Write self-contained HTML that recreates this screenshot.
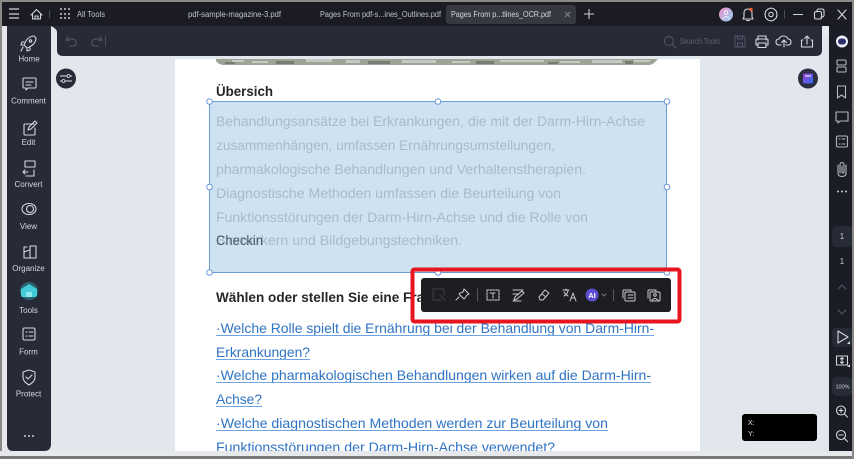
<!DOCTYPE html>
<html><head><meta charset="utf-8"><style>
html,body{margin:0;padding:0;width:854px;height:459px;overflow:hidden;background:#e2e6ed}
svg{display:block;filter:blur(.35px)}
text{font-family:"Liberation Sans",sans-serif}
.ic{fill:none;stroke:#d4d6dc;stroke-width:1.1;stroke-linecap:round;stroke-linejoin:round}
.tb{fill:none;stroke:#c9cbd0;stroke-width:1;stroke-linecap:round;stroke-linejoin:round}
.dim{fill:none;stroke:#555a68;stroke-width:1;stroke-linecap:round;stroke-linejoin:round}
.lb{font-size:8px;fill:#d6d8de;text-anchor:middle}
.body{font-size:14px;fill:#a8bacb}
.h{font-size:14px;font-weight:bold;fill:#26262a}
.lk{font-size:14px;fill:#2f73c4}
.ul{stroke:#6ea5e0;stroke-width:1}
.hd{fill:#fff;stroke:#6b9bd8;stroke-width:1}
</style></head><body>
<svg width="854" height="459" viewBox="0 0 854 459" xmlns="http://www.w3.org/2000/svg">
<rect width="854" height="459" fill="#e2e6ed"/>
<!-- page -->
<rect x="175" y="59" width="525" height="393" fill="#fff"/>
<path d="M216 59H658L654 63Q652 65 648 65H224Q219 65 216 61Z" fill="#9ea297"/>
<path d="M232 60h12v2h-12zM252 61h16v2h-16zM306 59h26v3h-26zM346 60h14v3h-14zM402 60h34v3h-34zM452 61h18v2h-18zM500 60h44v2h-44zM560 61h20v2h-20zM592 60h30v3h-30zM634 60h16v2h-16z" fill="#c6c9c1"/>
<path d="M225 62h10v2h-10zM276 61h18v3h-18zM368 61h22v3h-22zM476 61h18v3h-18zM548 62h10v2h-10zM625 61h8v3h-8z" fill="#777c72"/>

<text class="h" x="216" y="96" textLength="57" lengthAdjust="spacingAndGlyphs">Übersich</text>

<!-- selection -->
<rect x="209.500" y="101.500" width="457" height="171" fill="#cfe2f2" stroke="#6b9bd8"/>
<text class="body" x="216" y="126" textLength="429" lengthAdjust="spacingAndGlyphs">Behandlungsansätze bei Erkrankungen, die mit der Darm-Hirn-Achse</text>
<text class="body" x="216" y="150" textLength="339" lengthAdjust="spacingAndGlyphs">zusammenhängen, umfassen Ernährungsumstellungen,</text>
<text class="body" x="216" y="174" textLength="370" lengthAdjust="spacingAndGlyphs">pharmakologische Behandlungen und Verhaltenstherapien.</text>
<text class="body" x="216" y="198" textLength="345" lengthAdjust="spacingAndGlyphs">Diagnostische Methoden umfassen die Beurteilung von</text>
<text class="body" x="216" y="222" textLength="372" lengthAdjust="spacingAndGlyphs">Funktionsstörungen der Darm-Hirn-Achse und die Rolle von</text>
<text class="body" x="216" y="245" textLength="246" lengthAdjust="spacingAndGlyphs">Biomarkern und Bildgebungstechniken.</text>
<text x="216" y="245" font-size="14" fill="#4d5a66" textLength="47" lengthAdjust="spacingAndGlyphs">Checkin</text>
<circle class="hd" cx="209.500" cy="101.500" r="2.800"/><circle class="hd" cx="438" cy="101.500" r="2.800"/><circle class="hd" cx="667" cy="101.500" r="2.800"/>
<circle class="hd" cx="209.500" cy="187" r="2.800"/><circle class="hd" cx="667" cy="187" r="2.800"/>
<circle class="hd" cx="209.500" cy="272.500" r="2.800"/><circle class="hd" cx="438" cy="272.500" r="2.800"/><circle class="hd" cx="667" cy="272.500" r="2.800"/>

<text class="h" x="216" y="302" textLength="224" lengthAdjust="spacingAndGlyphs">Wählen oder stellen Sie eine Frage</text>

<text class="lk" x="216" y="333" textLength="438" lengthAdjust="spacingAndGlyphs">·Welche Rolle spielt die Ernährung bei der Behandlung von Darm-Hirn-</text>
<line class="ul" x1="216" x2="654" y1="335.500" y2="335.500"/>
<text class="lk" x="216" y="357" textLength="94" lengthAdjust="spacingAndGlyphs">Erkrankungen?</text>
<line class="ul" x1="216" x2="310" y1="359.500" y2="359.500"/>
<text class="lk" x="216" y="380" textLength="435" lengthAdjust="spacingAndGlyphs">·Welche pharmakologischen Behandlungen wirken auf die Darm-Hirn-</text>
<line class="ul" x1="216" x2="651" y1="382.500" y2="382.500"/>
<text class="lk" x="216" y="404" textLength="46" lengthAdjust="spacingAndGlyphs">Achse?</text>
<line class="ul" x1="216" x2="262" y1="406.500" y2="406.500"/>
<text class="lk" x="216" y="428" textLength="392" lengthAdjust="spacingAndGlyphs">·Welche diagnostischen Methoden werden zur Beurteilung von</text>
<line class="ul" x1="216" x2="608" y1="430.500" y2="430.500"/>
<text class="lk" x="216" y="452" textLength="339" lengthAdjust="spacingAndGlyphs">Funktionsstörungen der Darm-Hirn-Achse verwendet?</text>

<!-- red box + floating bar -->
<rect x="412.500" y="269.500" width="267" height="52" rx="2" fill="none" stroke="#e8141f" stroke-width="4"/>
<rect x="421" y="278" width="250" height="34" rx="3" fill="#1d1e21"/>
<g class="tb">
<path d="M441 300h-8v-11h11v6M440 295l5 5" style="stroke:#3c3e44"/>
<path d="M464 289l5 5-2 1-2 3-1 1-5-5 1-1 3-1zM459 297l-3 3"/>
<line x1="477.500" y1="289" x2="477.500" y2="301" stroke="#55575c"/>
<path d="M487 290h12v10h-12zM490 293h6M493 293v5" stroke-dasharray="2 1"/>
<path d="M513 290h10M513 294h5M514 300l1-3 7-6 2 2-7 6zM513 301h8"/>
<path d="M539 297l6-7 4 3-6 7h-3zM542 294l4 3"/>
<path d="M563 290h6M566 289v1.500M564 296c2-1 4-3 4-6M564 292c1 2 2 3 4 4M570 301l3-8 3 8M571 298h4"/>
</g>
<circle cx="592" cy="295" r="6.500" fill="#5b4ed0"/>
<text x="592" y="298" font-size="7.500" font-weight="bold" fill="#fff" text-anchor="middle">AI</text>
<path d="M602 294l2 2 2-2" class="tb" style="stroke:#777"/>
<line x1="613.500" y1="289" x2="613.500" y2="301" stroke="#55575c"/>
<g class="tb">
<path d="M623 298v-7q0-1 1-1h7v1"/><rect x="625" y="292" width="10" height="9" rx="1"/><path d="M628 295h5M628 298h5"/>
<path d="M648 298v-7q0-1 1-1h7v1"/><rect x="650" y="292" width="10" height="9" rx="1"/><circle cx="655" cy="295" r="1.300"/><path d="M652 300q3-3 6 0"/>
</g>

<!-- top frame & title bar -->
<rect width="854" height="2" fill="#8b8a86"/>
<rect y="2" width="854" height="24" fill="#1a1b23"/>
<path d="M9 9h10M9 14h10M9 18h10" stroke="#d0d2d6" stroke-width="1.200" fill="none"/>
<path class="ic" d="M31 15l5.500-5.500L42 15M32.500 14v5h8v-5M35 19v-3h3v3"/>
<line x1="49.500" y1="10" x2="49.500" y2="18" stroke="#4a4c55"/>
<g fill="#c9cbd0"><circle cx="61" cy="9" r="1"/><circle cx="65" cy="9" r="1"/><circle cx="69" cy="9" r="1"/><circle cx="61" cy="14" r="1"/><circle cx="65" cy="14" r="1"/><circle cx="69" cy="14" r="1"/><circle cx="61" cy="18" r="1"/><circle cx="65" cy="18" r="1"/><circle cx="69" cy="18" r="1"/></g>
<text x="77" y="17" font-size="8" fill="#c2c4ca" textLength="28" lengthAdjust="spacingAndGlyphs">All Tools</text>
<text x="188" y="17" font-size="8" fill="#c2c4ca" textLength="93" lengthAdjust="spacingAndGlyphs">pdf-sample-magazine-3.pdf</text>
<text x="320" y="17" font-size="8" fill="#c2c4ca" textLength="121" lengthAdjust="spacingAndGlyphs">Pages From pdf-s...ines_Outlines.pdf</text>
<rect x="446" y="5" width="130" height="19" rx="3" fill="#363941"/>
<text x="451" y="17" font-size="8" fill="#d6d8dc" textLength="100" lengthAdjust="spacingAndGlyphs">Pages From p...tlines_OCR.pdf</text>
<path d="M565 12l5 5M570 12l-5 5" stroke="#85878d" fill="none"/>
<path d="M589 9v10M584 14h10" stroke="#c9cbd0" stroke-width="1.100" fill="none"/>
<defs><linearGradient id="av" x1="0" y1="0" x2="1" y2="1"><stop offset="0" stop-color="#f28cc8"/><stop offset="1" stop-color="#8fd4f5"/></linearGradient>
<linearGradient id="bk" x1="0" y1="0" x2="1" y2="1"><stop offset="0" stop-color="#a13fd8"/><stop offset="1" stop-color="#2f6ef0"/></linearGradient></defs>
<circle cx="726" cy="14.500" r="7" fill="url(#av)"/><circle cx="726" cy="12.500" r="1.800" fill="none" stroke="#fff" stroke-width=".8"/><path d="M722.500 18.500q3.500-3.500 7 0" fill="none" stroke="#fff" stroke-width=".8"/>
<path class="ic" d="M743 19h10l-1-2v-4q0-4-4-4t-4 4v4zM746.500 20.500h3"/><circle cx="751" cy="9.500" r="1.800" fill="#f0603a"/>
<circle class="ic" cx="771" cy="14.500" r="2.200"/><path class="ic" d="M768 9l3-1 3 1 2.500 2.500 .5 3-.5 3-2.500 2.500-3 1-3-1-2.500-2.500-.5-3 .5-3z"/>
<line x1="784.500" y1="10" x2="784.500" y2="19" stroke="#4a4c55"/>
<path d="M793 14.500h10" stroke="#c9cbd0" stroke-width="1.100"/>
<path class="ic" d="M817 12v-1q0-2 2-2h3q2 0 2 2v4q0 2-2 2h-1"/><rect class="ic" x="814.500" y="11.500" width="7" height="7.500" rx="1.500"/>
<path class="ic" d="M838 10l8 9M846 10l-8 9"/>

<!-- toolbar -->
<path d="M51 26h771v24q0 6-6 6H63q-6 0-6-6V32q0-3-6-6z" fill="#272b38"/>
<path class="dim" d="M68 37l-2 3 3 1M67 39h5q4 0 4 3.500t-4 3.500h-2M100 37l2 3-3 1M101 39h-5q-4 0-4 3.500t4 3.500h2"/>
<line x1="105.500" y1="36" x2="105.500" y2="47" stroke="#4a4e5a"/>
<circle class="dim" cx="669" cy="41" r="4.500"/><path class="dim" d="M672.500 44.500l3.500 3.500"/>
<text x="680" y="44" font-size="8.500" fill="#5e6270" textLength="40" lengthAdjust="spacingAndGlyphs">Search Tools</text>
<path class="dim" d="M735 36h8l2 2v9h-10zM737.500 36v3h5v-3M737.500 47v-4h5v4"/>
<g class="ic"><path d="M758 40v-4h8v4M758 45h-2v-5q0-1 1-1h10q1 0 1 1v5h-2"/><rect x="758" y="43" width="8" height="4.500"/>
<path d="M781 45h-2q-3 0-3-3t3-3q1-3 4.500-3t4.500 3q3 0 3 3t-3 3h-2M784 47v-7M781.500 42.500l2.500-2.500 2.500 2.500"/>
<path d="M803 40h-1.500v7h11v-7H811M807 44v-8M804.500 38.500l2.500-2.500 2.500 2.500"/></g>

<!-- filter/calendar floats -->
<circle cx="66" cy="78.500" r="10" fill="#272b38"/>
<path d="M60 76h12M60 81h12" stroke="#e0e2e6" stroke-width=".9"/><circle cx="68.500" cy="76" r="1.500" fill="#272b38" stroke="#e0e2e6" stroke-width=".8"/><circle cx="63.500" cy="81" r="1.500" fill="#272b38" stroke="#e0e2e6" stroke-width=".8"/>
<circle cx="808" cy="78.500" r="10" fill="#2a2e40"/>
<rect x="803" y="73.500" width="10" height="10" rx="1.500" fill="url(#bk)"/><path d="M805 76h6" stroke="#fff" stroke-width="1"/>

<!-- left sidebar -->
<path d="M7 26h44v418q0 7-7 7H13q-6 0-6-7z" fill="#272b38"/>
<rect x="2" y="26" width="5" height="430" fill="#e6e8ec"/>
<rect x="0" y="0" width="2" height="459" fill="#8b8a86"/>
<g class="ic">
<path d="M34 36c-4 0-8 3-10 9l3 3c6-2 9-6 9-10zM24 42h-2l-1 3h3M30 48v2l-3 1v-3M23 47l-2 4"/><circle cx="30.500" cy="41" r="1.200"/>
<path d="M24 78h11q1 0 1 1v8q0 1-1 1h-7l-2 2v-2h-2q-1 0-1-1v-8q0-1 1-1zM26 82h7M26 85h5"/>
<path d="M34 124h-9q-1 0-1 1v9q0 1 1 1h9q1 0 1-1v-6M28 130l1-3 6-6 2 2-6 6z"/>
<path d="M25 161h10v6H25zM34 170v6H26M25 170l-2 2 2 2M23 172h5"/>
<ellipse cx="29" cy="209" rx="7" ry="5.500"/><circle cx="30" cy="209" r="3.500"/>
<path d="M30 246h6v12h-6zM30 250l-6 2v6h6M24 252v-5h3"/>
<rect x="23" y="328" width="12" height="12" rx="1.500"/><path d="M26 332h1M26 336h1M29 332h4M29 336h4"/>
<path d="M29 370l6 2v5c0 4-3 6-6 8-3-2-6-4-6-8v-5zM26 377l2 2 4-4"/>
</g>
<circle cx="29" cy="291" r="9" fill="#2f8f9e" opacity=".55"/>
<path d="M29 284l8 5v6q0 2-2 2H23q-2 0-2-2v-6z" fill="#43cbd8"/><path d="M26 297v-5h6v5" fill="#8be6ee"/>
<text class="lb" x="29" y="61.500">Home</text>
<text class="lb" x="28.500" y="103.500">Comment</text>
<text class="lb" x="28.500" y="145">Edit</text>
<text class="lb" x="28.500" y="187">Convert</text>
<text class="lb" x="28.500" y="229">View</text>
<text class="lb" x="28.500" y="271">Organize</text>
<text class="lb" x="28.500" y="313">Tools</text>
<text class="lb" x="28.500" y="354.500">Form</text>
<text class="lb" x="28.500" y="396.500">Protect</text>
<g fill="#c9cbd0"><circle cx="25" cy="436" r="1"/><circle cx="29" cy="436" r="1"/><circle cx="33" cy="436" r="1"/></g>

<!-- right sidebar -->
<rect x="829" y="26" width="23" height="425" fill="#1b1d26"/>
<rect x="822" y="26" width="7" height="8" fill="#e8eaee" opacity=".9"/>
<circle cx="842" cy="41.500" r="6" fill="#eef0fa"/><rect x="838" y="38.500" width="8" height="6" rx="3" fill="#2c2f6e"/>
<g class="ic" style="stroke:#b4b7bf">
<rect x="837" y="60" width="9" height="5" rx="1"/><rect x="837" y="67" width="9" height="5" rx="1"/>
<path d="M837.500 86h8v12l-4-3-4 3z"/>
<path d="M836 112h12v9h-8l-2 2v-2h-2z"/>
<rect x="836.500" y="136" width="11" height="11" rx="1.500"/><path d="M839 139h1M839 144h1M842 139h3M842 144h3"/>
<path d="M840 173v-8q0-2.500 2-2.500t2 2.500v7q0 1-1 1t-1-1v-6M838 165v8q0 3.500 4 3.500t4-3.500v-8"/>
</g>
<g fill="#c9cbd0"><circle cx="838" cy="191.500" r="1"/><circle cx="842" cy="191.500" r="1"/><circle cx="846" cy="191.500" r="1"/></g>
<rect x="832" y="226" width="20" height="21" rx="4" fill="#272b38"/>
<text x="842" y="239" font-size="8" fill="#c9cbd0" text-anchor="middle">1</text>
<text x="842" y="264" font-size="8" fill="#c9cbd0" text-anchor="middle">1</text>
<path class="dim" d="M838 289l4-4 4 4M838 310l4 4 4-4"/>
<rect x="832" y="328" width="20" height="19" rx="4" fill="#272b38"/>
<path class="ic" d="M838 331l10 6-10 6z"/>
<path d="M850 341v3h-3z" fill="#d4d6dc"/>
<rect class="ic" x="836.500" y="356" width="11" height="9"/><path d="M842 357.500v6M840.500 359l1.500-1.500 1.500 1.500M840.500 362l1.500 1.500 1.500-1.500" class="ic"/>
<path d="M850 364v3h-3z" fill="#d4d6dc"/>
<rect x="832" y="377" width="20" height="19" rx="5" fill="#272b38"/>
<text x="842.500" y="388.500" font-size="5.500" fill="#d4d6dc" text-anchor="middle">100%</text>
<g class="ic"><circle cx="841" cy="410.500" r="4.500"/><path d="M844.500 414l3 3M841 408.500v4M839 410.500h4"/>
<circle cx="841" cy="435" r="4.500"/><path d="M844.500 438.500l3 3M839 435h4"/></g>

<!-- coordinate box -->
<rect x="742" y="414" width="75" height="27" rx="3" fill="#000"/>
<text x="748" y="425" font-size="7" fill="#e0e0e0">X:</text>
<text x="748" y="436" font-size="7" fill="#e0e0e0">Y:</text>

<!-- bottom + right frame -->
<rect x="0" y="451" width="852" height="5" fill="#e6e8ec"/>
<rect x="0" y="456" width="854" height="3" fill="#78797c"/>
<rect x="852" y="0" width="2" height="459" fill="#8b8a86"/>
</svg>
</body></html>
